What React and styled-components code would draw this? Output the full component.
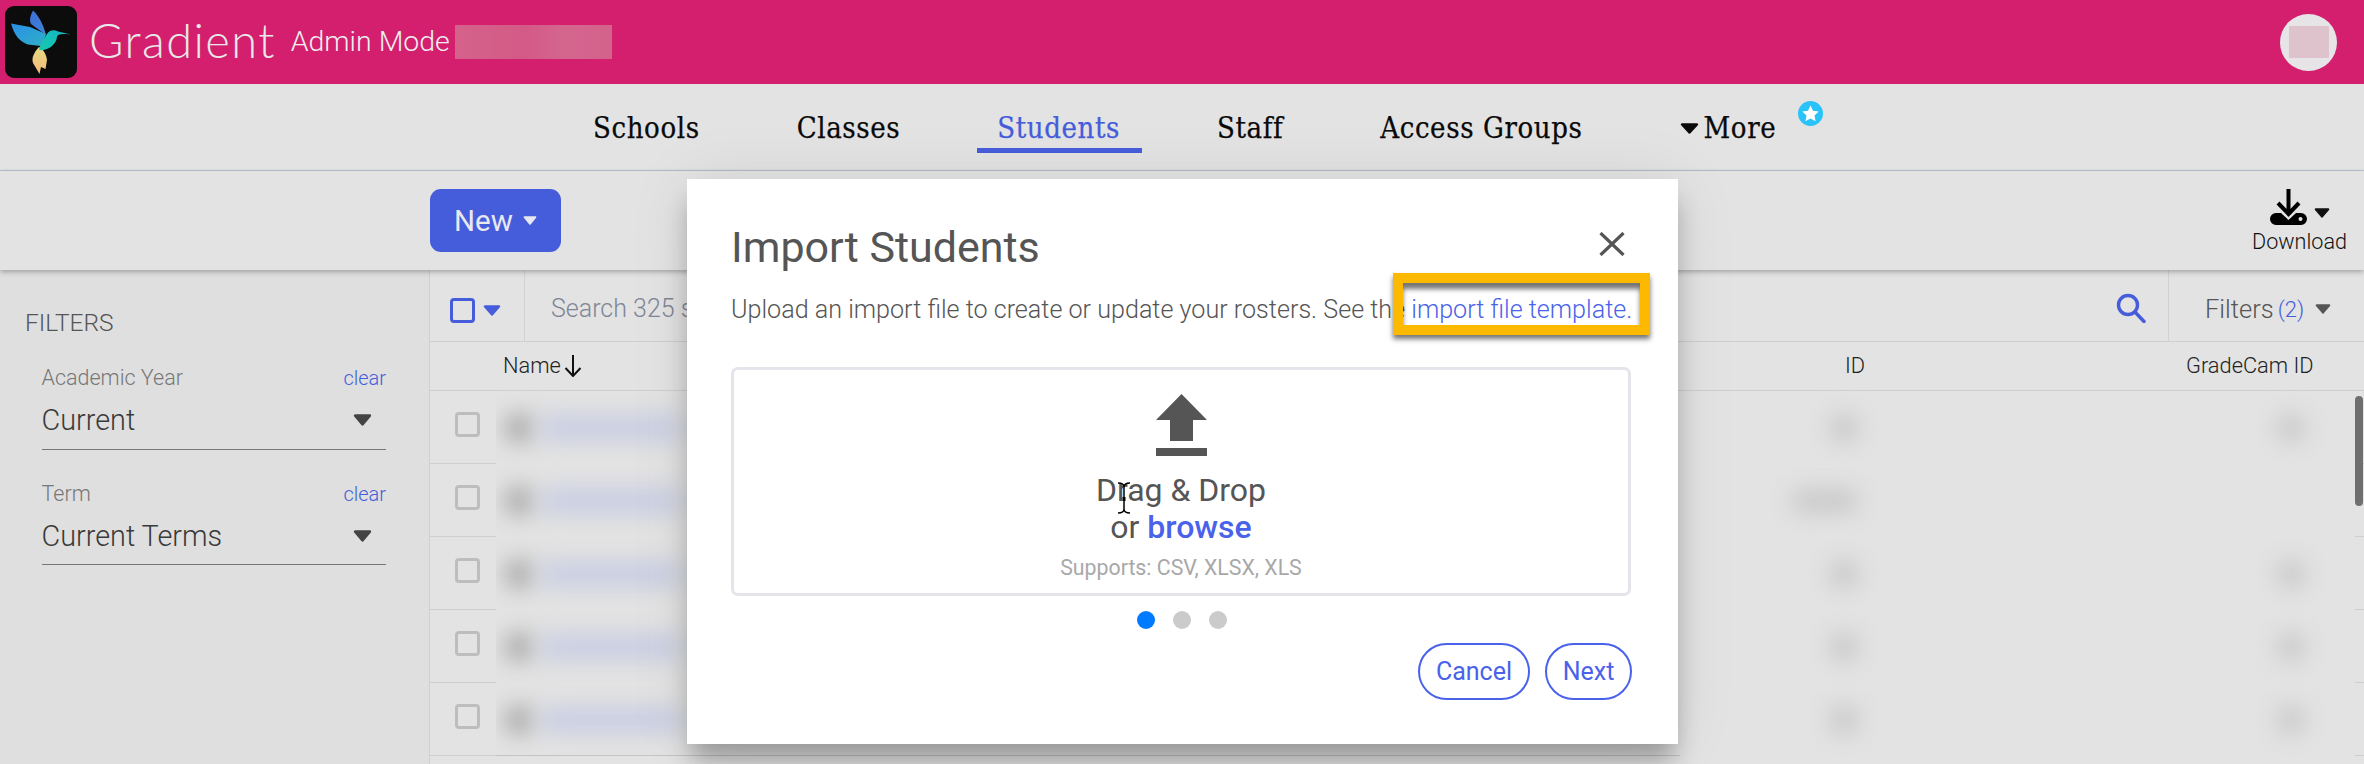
import React from "react";
import styled, { createGlobalStyle } from "styled-components";

const BLUE = "#465ddb";
const LINK = "#4a62ea";

const Global = createGlobalStyle`
  html, body { margin: 0; padding: 0; background: #e3e3e3; }
  * { box-sizing: border-box; }
  body { font-family: Roboto, "Liberation Sans", sans-serif; }
`;

const Page = styled.div`
  position: relative;
  width: 2364px;
  height: 764px;
  overflow: hidden;
  background: #e3e3e3;
`;

const Header = styled.header`
  height: 84px;
  background: #d31f6e;
  display: flex;
  align-items: center;
  padding: 0 27px 0 5px;
`;
const Logo = styled.svg`
  width: 72px;
  height: 72px;
  flex: none;
`;
const Brand = styled.div`
  margin-left: 12px;
  padding-bottom: 5px;
  font-family: Lato, sans-serif;
  font-weight: 300;
  font-size: 47px;
  letter-spacing: 1.4px;
  line-height: 78px;
  color: #e8e8e8;
`;
const Mode = styled.div`
  margin-left: 15px;
  padding-bottom: 2px;
  font-size: 28.5px;
  font-weight: 300;
  color: #eee;
`;
const Redacted = styled.div`
  margin-left: 5px;
  width: 157px;
  height: 34px;
  background: linear-gradient(90deg, #d4628b, #d45a86 45%, #d4668e 70%, #d4628b);
  filter: blur(0.6px);
`;
const Avatar = styled.div`
  margin-left: auto;
  width: 57px;
  height: 57px;
  border-radius: 50%;
  background: #e6e4e6;
  display: flex;
  align-items: center;
  justify-content: center;
`;
const AvatarFace = styled.div`
  width: 40px;
  height: 32px;
  background: #dfc3cc;
`;

const Nav = styled.nav`
  height: 87px;
  border-bottom: 1px solid #b8c2d0;
  display: flex;
  gap: 97px;
  padding-left: 593px;
`;
const NavItem = styled.a`
  position: relative;
  display: flex;
  align-items: center;
  gap: 5px;
  height: 64px;
  padding-top: 24px;
  font-family: "DejaVu Serif", serif;
  font-size: 29px;
  letter-spacing: 0.6px;
  font-stretch: condensed;
  -webkit-text-stroke: 0.25px currentColor;
  color: ${(p) => (p.$active ? BLUE : "#0a0a0a")};
  white-space: nowrap;
`;
const Underline = styled.span`
  position: absolute;
  left: -20px;
  right: -22px;
  top: 64px;
  height: 5px;
  background: ${BLUE};
`;
const Star = styled.svg`
  position: absolute;
  right: -47px;
  top: 17px;
  width: 25px;
  height: 25px;
`;

const Toolbar = styled.div`
  position: relative;
  z-index: 1;
  height: 99px;
  padding: 18px 17px 0 430px;
  display: flex;
  justify-content: space-between;
  align-items: flex-start;
  background: #e3e3e3;
  box-shadow: 0 2px 5px rgba(0, 0, 0, 0.28);
`;
const NewButton = styled.button`
  width: 131px;
  height: 63px;
  border: 0;
  border-radius: 11px;
  background: ${BLUE};
  color: #e8e8f0;
  font-family: Roboto, sans-serif;
  font-size: 29.5px;
  font-weight: 400;
  display: flex;
  align-items: center;
  justify-content: center;
  gap: 10px;
`;
const DownloadBox = styled.div`
  display: flex;
  flex-direction: column;
  align-items: center;
  gap: 3px;
`;
const DownloadIcons = styled.div`
  display: flex;
  align-items: flex-start;
  gap: 7px;
`;
const CaretSlot = styled.span`
  margin-top: 14px;
`;
const DownloadLabel = styled.div`
  font-size: 21.6px;
  font-weight: 300;
  color: #111;
  line-height: 27px;
`;

const Body = styled.div`
  display: flex;
  height: 494px;
`;
const Sidebar = styled.aside`
  width: 430px;
  flex: none;
  background: #dfdfdf;
  border-right: 1px solid #cfcfcf;
  padding: 40px 43px 0 25px;
`;
const SideTitle = styled.div`
  font-size: 24.5px;
  font-weight: 300;
  color: #555;
  line-height: 26px;
  margin-bottom: 29px;
`;
const FilterGroup = styled.div`
  margin-left: 16.5px;
  margin-bottom: 31px;
`;
const FilterHead = styled.div`
  display: flex;
  justify-content: space-between;
  align-items: baseline;
  line-height: 26px;
`;
const FilterLabel = styled.span`
  font-size: 21.5px;
  font-weight: 300;
  color: #777;
`;
const Clear = styled.span`
  font-size: 20px;
  font-weight: 300;
  color: ${BLUE};
`;
const FilterValue = styled.div`
  height: 58.5px;
  border-bottom: 1px solid #777;
  display: flex;
  justify-content: space-between;
  align-items: center;
  padding: 1px 14px 0 0;
  font-size: 28.8px;
  font-weight: 300;
  color: #3a3a3a;
`;

const Main = styled.main`
  flex: 1;
  position: relative;
`;
const SearchRow = styled.div`
  height: 72px;
  border-bottom: 1px solid #cfcfcf;
  display: flex;
  align-items: stretch;
`;
const SelectAll = styled.div`
  width: 95px;
  padding: 10px 0 0 20px;
  display: flex;
  align-items: center;
  gap: 8px;
  border-right: 1px solid #d2d2d2;
  flex: none;
`;
const Check = styled.span`
  width: 25px;
  height: 25px;
  flex: none;
  display: block;
  border: 3px solid ${(p) => (p.$primary ? BLUE : "#bdbdbd")};
  border-radius: 4px;
`;
const SearchText = styled.div`
  flex: 1;
  padding: 5px 22px 0 26px;
  display: flex;
  align-items: center;
  justify-content: space-between;
  font-size: 25px;
  font-weight: 300;
  color: #7f8696;
`;
const FiltersBox = styled.div`
  width: 196px;
  flex: none;
  border-left: 1px solid #d2d2d2;
  padding: 7px 0 0 36px;
  display: flex;
  align-items: center;
  gap: 4px;
  font-size: 25.5px;
  font-weight: 300;
  color: #555;
`;
const Count = styled.span`
  font-size: 22px;
  color: ${BLUE};
  margin-right: 7px;
`;
const HeadRow = styled.div`
  height: 49px;
  border-bottom: 1px solid #cfcfcf;
  display: flex;
  align-items: center;
  padding-bottom: 1px;
  font-size: 21.8px;
  color: #222;
  font-weight: 300;
`;
const HeadCell = styled.div`
  width: ${(p) => p.$w}px;
  flex: none;
  padding-left: ${(p) => p.$pad}px;
  display: flex;
  align-items: center;
  gap: 3px;
`;
const Row = styled.div`
  height: 73px;
  display: flex;
`;
const RowCheck = styled.div`
  width: 66px;
  flex: none;
  border-bottom: 1px solid #cfcfcf;
  padding: 21px 0 0 25px;
`;
const BlurCell = styled.div`
  flex: 1;
  display: flex;
  align-items: center;
  padding-left: 8px;
  overflow: hidden;
`;
const Gutter = styled.div`
  width: 9px;
  flex: none;
  border-bottom: 1px solid #cfcfcf;
`;
const Blob = styled.span`
  display: block;
  flex: none;
  height: ${(p) => p.$h || 30}px;
  width: ${(p) => p.$w}px;
  margin-left: ${(p) => p.$ml || 0}px;
  background: ${(p) => p.$c};
  border-radius: 15px;
  filter: blur(${(p) => p.$b || 11}px);
`;
const Tail = styled.div`
  margin-top: -1px;
  margin-left: 66px;
  width: 1184px;
  height: 1px;
  background: #c4c4c4;
`;
const Scrollbar = styled.div`
  position: absolute;
  left: 1925px;
  top: 126px;
  width: 8px;
  height: 110px;
  border-radius: 4px;
  background: #6f6f6f;
`;

const Modal = styled.section`
  position: absolute;
  z-index: 5;
  left: 687px;
  top: 179px;
  width: 991px;
  height: 565px;
  background: #fff;
  padding: 39px 46px 0 44px;
  box-shadow: 0 20px 24px -4px rgba(0, 0, 0, 0.3), 0 0 60px rgba(0, 0, 0, 0.08);
`;
const ModalHead = styled.div`
  display: flex;
  justify-content: space-between;
  align-items: flex-start;
`;
const ModalTitle = styled.h2`
  margin: 0;
  font-size: 43px;
  font-weight: 400;
  line-height: 58px;
  color: #555;
`;
const CloseIcon = styled.svg`
  width: 26px;
  height: 24px;
  margin: 14px 7px 0 0;
`;
const ModalSub = styled.p`
  margin: 16px 0 0;
  font-size: 25.13px;
  font-weight: 300;
  line-height: 36px;
  color: #555;
  white-space: nowrap;
`;
const TemplateLink = styled.span`
  color: ${LINK};
`;
const Highlight = styled.div`
  position: absolute;
  left: 706px;
  top: 94px;
  width: 257px;
  height: 62px;
  border: 10px solid #fdb900;
  box-shadow: 0 4px 5px rgba(0, 0, 0, 0.55), inset 0 6px 5px rgba(0, 0, 0, 0.55);
`;
const Drop = styled.div`
  margin-top: 39px;
  width: 900px;
  height: 229px;
  border: 3px solid #e4e5ea;
  border-radius: 7px;
  display: flex;
  flex-direction: column;
  align-items: center;
  padding-top: 24px;
`;
const UploadIcon = styled.svg`
  width: 51px;
  height: 62px;
`;
const DropLine = styled.div`
  font-size: 32px;
  line-height: 37px;
  color: #555;
  &:first-of-type {
    margin-top: 16px;
  }
`;
const Browse = styled.span`
  color: ${LINK};
  font-weight: 500;
`;
const Supports = styled.div`
  margin-top: 9px;
  font-size: 21.3px;
  color: #a8a8a8;
`;
const Dots = styled.div`
  display: flex;
  justify-content: center;
  gap: 18px;
  margin-top: 15px;
`;
const Dot = styled.span`
  width: 18px;
  height: 18px;
  border-radius: 50%;
  background: ${(p) => (p.$on ? "#007bff" : "#cbcbcb")};
`;
const Actions = styled.div`
  display: flex;
  justify-content: flex-end;
  gap: 15px;
  margin-top: 14px;
`;
const Pill = styled.button`
  height: 57px;
  width: ${(p) => p.$w}px;
  border: 2px solid ${LINK};
  border-radius: 29px;
  background: #fff;
  color: ${LINK};
  font-family: Roboto, sans-serif;
  font-size: 25px;
  font-weight: 400;
  padding: 0;
`;
const Cursor = styled.svg`
  position: absolute;
  left: 430px;
  top: 303px;
  width: 14px;
  height: 32px;
`;

const Caret = ({ w = 18, h = 11, c = "#444" }) => (
  <svg width={w} height={h} viewBox="0 0 18 11" preserveAspectRatio="none" style={{ flex: "none" }}>
    <path d="M2 1.5 H16 L9 9.5 Z" fill={c} stroke={c} strokeWidth="2.4" strokeLinejoin="round" />
  </svg>
);

const Bird = () => (
  <Logo viewBox="5 5 72 72">
    <defs>
      <linearGradient id="w1" x1="0" y1="0" x2="1" y2="1">
        <stop offset="0" stopColor="#3d6fd6" />
        <stop offset="1" stopColor="#3f84d8" />
      </linearGradient>
      <linearGradient id="w2" x1="0" y1="0" x2="1" y2="1">
        <stop offset="0" stopColor="#2a8ee6" />
        <stop offset="1" stopColor="#2fb0c6" />
      </linearGradient>
      <linearGradient id="b1" x1="0" y1="1" x2="1" y2="0">
        <stop offset="0" stopColor="#18c9ae" />
        <stop offset="1" stopColor="#14b4c4" />
      </linearGradient>
      <linearGradient id="t1" x1="0" y1="0" x2="0" y2="1">
        <stop offset="0" stopColor="#e6dc84" />
        <stop offset="1" stopColor="#f4b878" />
      </linearGradient>
    </defs>
    <rect x="5" y="5" width="72" height="72" rx="9" fill="#0c0c0c" />
    <path d="M39 46C33.500 52 31.500 57 33 62L39.500 73L41 66L45.500 68L47 59C46.500 54 43.500 48 39 46Z" fill="url(#t1)" />
    <path d="M33 9.5C29.500 16 29.500 20 31 23L46 34C44 26 40 16 33 9.5Z" fill="url(#w1)" />
    <path d="M11 22.500C14 34 20 41 28 43.500L41 45C43 41 45 37 46 33L30 26Z" fill="url(#w2)" />
    <path d="M71 33.500L58 30.500C54 28 49 29 47 33C44 38 41 42 39 49C46 50 56 45 57 36C58 33 61 32.500 71 33.500Z" fill="url(#b1)" />
  </Logo>
);

const rows = [
  { id: 30, idGap: 1146, cam: true },
  { id: 68, idGap: 1108, cam: false },
  { id: 30, idGap: 1146, cam: true },
  { id: 30, idGap: 1146, cam: true },
  { id: 30, idGap: 1146, cam: true },
];

export default function App() {
  return (
    <Page>
      <Global />
      <Header>
        <Bird />
        <Brand>Gradient</Brand>
        <Mode>Admin Mode</Mode>
        <Redacted />
        <Avatar>
          <AvatarFace />
        </Avatar>
      </Header>
      <Nav>
        <NavItem>Schools</NavItem>
        <NavItem>Classes</NavItem>
        <NavItem $active>
          Students
          <Underline />
        </NavItem>
        <NavItem>Staff</NavItem>
        <NavItem>Access Groups</NavItem>
        <NavItem>
          <Caret w={19} h={11} c="#0a0a0a" />
          More
          <Star viewBox="0 0 25 25">
            <circle cx="12.5" cy="12.5" r="12.5" fill="#29c3f9" />
            <path d="M12.500 4.500l2.500 5.300 5.700.7-4.200 4 1.100 5.700-5.100-2.800-5.100 2.800 1.100-5.700-4.200-4 5.700-.7z" fill="#fff" />
          </Star>
        </NavItem>
      </Nav>
      <Toolbar>
        <NewButton>
          New
          <Caret w={14} h={9} c="#e8e8f0" />
        </NewButton>
        <DownloadBox>
          <DownloadIcons>
            <svg width="37" height="36" viewBox="0 0 37 36">
              <path d="M18.500 0V23M8 14L18.500 25L29 14" fill="none" stroke="#000" strokeWidth="4" />
              <path d="M6 24H11L18.500 31L26 24H31a6 6 0 0 1 0 12H6a6 6 0 0 1 0-12Z" fill="#000" />
              <circle cx="30.500" cy="30" r="2" fill="#e3e3e3" />
            </svg>
            <CaretSlot>
              <Caret w={16} h={10} c="#111" />
            </CaretSlot>
          </DownloadIcons>
          <DownloadLabel>Download</DownloadLabel>
        </DownloadBox>
      </Toolbar>
      <Body>
        <Sidebar>
          <SideTitle>FILTERS</SideTitle>
          <FilterGroup>
            <FilterHead>
              <FilterLabel>Academic Year</FilterLabel>
              <Clear>clear</Clear>
            </FilterHead>
            <FilterValue>
              Current
              <Caret w={19} h={12} />
            </FilterValue>
          </FilterGroup>
          <FilterGroup>
            <FilterHead>
              <FilterLabel>Term</FilterLabel>
              <Clear>clear</Clear>
            </FilterHead>
            <FilterValue>
              Current Terms
              <Caret w={19} h={12} />
            </FilterValue>
          </FilterGroup>
        </Sidebar>
        <Main>
          <SearchRow>
            <SelectAll>
              <Check $primary />
              <Caret w={18} h={11} c={BLUE} />
            </SelectAll>
            <SearchText>
              <span>Search 325 s</span>
              <svg width="30" height="30" viewBox="0 0 30 30">
                <circle cx="12" cy="12" r="9.500" fill="none" stroke={BLUE} strokeWidth="3.400" />
                <path d="M19 19L28 28.500" fill="none" stroke={BLUE} strokeWidth="3.400" strokeLinecap="round" />
              </svg>
            </SearchText>
            <FiltersBox>
              Filters <Count>(2)</Count>
              <Caret w={16} h={10} c="#555" />
            </FiltersBox>
          </SearchRow>
          <HeadRow>
            <HeadCell $w={1415} $pad={73}>
              Name
              <svg width="18" height="22" viewBox="0 0 18 22">
                <path d="M9 0V21M1.500 13L9 21L16.500 13" fill="none" stroke="#111" strokeWidth="2" />
              </svg>
            </HeadCell>
            <HeadCell $w={341} $pad={0}>ID</HeadCell>
            <HeadCell $w={178} $pad={0}>GradeCam ID</HeadCell>
          </HeadRow>
          {rows.map((r, i) => (
            <Row key={i}>
              <RowCheck>
                <Check />
              </RowCheck>
              <BlurCell>
                <Blob $w={30} $c="#aaaaaa" />
                <Blob $w={145} $h={26} $c="#c9cde2" $ml={4} />
                <Blob $w={r.id} $h={r.cam ? 30 : 24} $c="#c9c9c9" $ml={r.idGap} />
                {r.cam && <Blob $w={30} $c="#cacaca" $ml={417} />}
              </BlurCell>
              <Gutter />
            </Row>
          ))}
          <Tail />
          <Scrollbar />
        </Main>
      </Body>
      <Modal>
        <ModalHead>
          <ModalTitle>Import Students</ModalTitle>
          <CloseIcon viewBox="0 0 26 24">
            <path d="M1.500 1L24.500 23M24.500 1L1.500 23" fill="none" stroke="#555" strokeWidth="3.200" />
          </CloseIcon>
        </ModalHead>
        <ModalSub>
          Upload an import file to create or update your rosters. See the{" "}
          <TemplateLink>import file template.</TemplateLink>
        </ModalSub>
        <Highlight />
        <Drop>
          <UploadIcon viewBox="0 0 51 62">
            <path d="M25.500 0L51 26H37V47H14V26H0Z" fill="#555" />
            <rect y="54" width="51" height="8" fill="#555" />
          </UploadIcon>
          <DropLine>Drag &amp; Drop</DropLine>
          <DropLine>
            or <Browse>browse</Browse>
          </DropLine>
          <Supports>Supports: CSV, XLSX, XLS</Supports>
        </Drop>
        <Dots>
          <Dot $on />
          <Dot />
          <Dot />
        </Dots>
        <Actions>
          <Pill $w={112}>Cancel</Pill>
          <Pill $w={87}>Next</Pill>
        </Actions>
        <Cursor viewBox="0 0 14 32">
          <path d="M1 1C4 1 7 2 7 5V27C7 30 4 31 1 31M13 1C10 1 7 2 7 5M7 27C7 30 10 31 13 31" fill="none" stroke="#000" strokeWidth="1.500" />
          <rect x="5.500" y="15" width="3" height="4" fill="#000" />
        </Cursor>
      </Modal>
    </Page>
  );
}
